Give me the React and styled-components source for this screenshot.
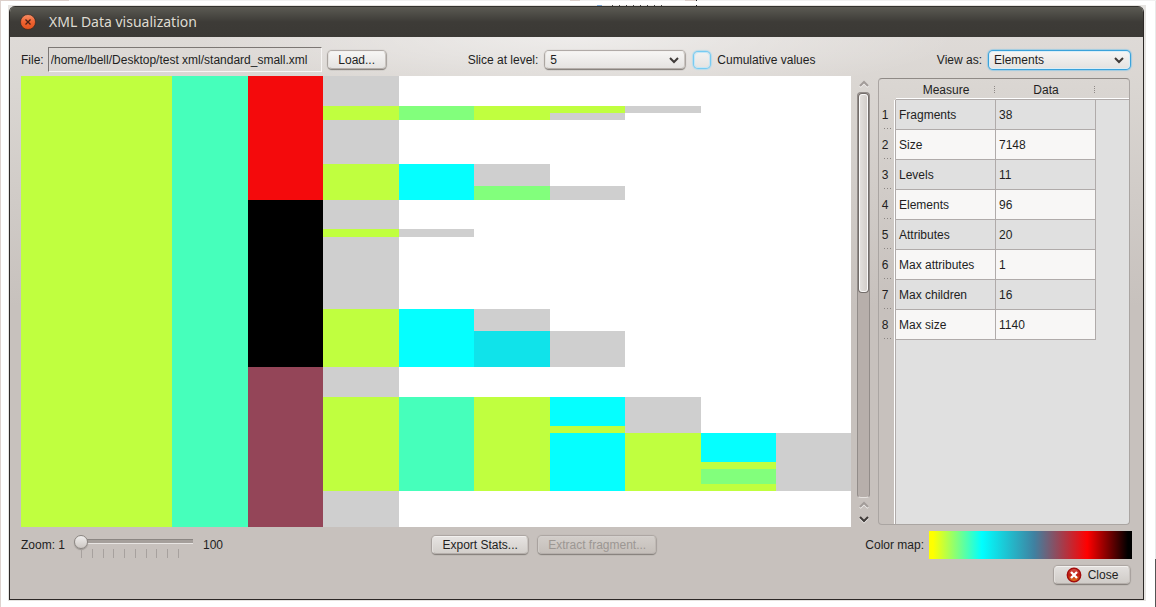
import React, { useState } from "react";
import styled, { createGlobalStyle, css } from "styled-components";

const GlobalStyle = createGlobalStyle`
  *, *::before, *::after { box-sizing: border-box; }
  body {
    margin: 0;
    background: #fff;
    color: #221e1e;
    font: 12px/16px "Liberation Sans", Arial, sans-serif;
  }
  button, input, select { font: inherit; color: inherit; margin: 0; }
`;

const Desktop = styled.div`
  display: flex;
  min-height: 100vh;
  padding: 6px 12px 7px 9px;
  background:
    linear-gradient(#dccfca, #dccfca) 0 0 / 69px 1px no-repeat,
    linear-gradient(#dccfca, #dccfca) 570px 0 / 10px 1px no-repeat,
    linear-gradient(#dccfca, #dccfca) 685px 0 / 11px 1px no-repeat,
    linear-gradient(#222, #222) 696px 0 / 1px 1px no-repeat,
    linear-gradient(#222, #222) 696px 5px / 1px 1px no-repeat,
    linear-gradient(#7ba3cc, #7ba3cc) 597px 5px / 5px 1px no-repeat,
    repeating-linear-gradient(to right, #444 0 1px, transparent 1px 7px) 612px 5px / 52px 1px no-repeat,
    linear-gradient(#f1f1f1, #f1f1f1) 0 0 / 100% 1px no-repeat,
    linear-gradient(#ddd2ce, #ddd2ce) 0 0 / 1px 100% no-repeat,
    linear-gradient(#555, #555) 100% 100% / 1px 48px no-repeat,
    linear-gradient(#e9e9e9, #e9e9e9) 100% 0 / 1px 100% no-repeat,
    linear-gradient(#e6e4e1, #e6e4e1) 8px 5px / calc(100% - 18px) calc(100% - 11px) no-repeat,
    #fff;
`;

const Window = styled.main`
  flex: 1;
  min-width: 0;
  display: flex;
  flex-direction: column;
  border: 1px solid #2c2826;
  border-top: 0;
  border-radius: 6px 6px 0 0;
  overflow: hidden;
  background:
    radial-gradient(ellipse 380px 60px at 50% 31px, rgba(255, 255, 255, 0.5), transparent),
    linear-gradient(#dedad7 31px, #dad6d2 80px, #c7c1bd 300px);
`;

const TitleBar = styled.header`
  display: flex;
  align-items: center;
  gap: 13px;
  height: 31px;
  padding-left: 10px;
  background: linear-gradient(#33312d 0 1px, #5b5a53 1px, #3d3b37 16px, #3b3935);
`;

const Title = styled.h1`
  margin: 0;
  font: 14px/18px "Noto Sans", sans-serif;
  color: #dfdbd2;
`;

const WindowClose = styled.button`
  display: flex;
  padding: 0;
  border: 0;
  background: none;
`;

const Toolbar = styled.div`
  display: flex;
  align-items: center;
  height: 39px;
  padding: 6px 12px 0 11px;
  white-space: nowrap;
`;

const Spacer = styled.div`
  flex: ${(p) => p.$grow || 1};
`;

const Label = styled.label`
  margin-right: ${(p) => p.$gap ?? 6}px;
`;

const PathBox = styled.input`
  width: 274px;
  height: 25px;
  margin-right: 5px;
  padding: 0 2px;
  border: 1px solid;
  border-color: #7c7774 #f7f5f4 #f7f5f4 #7c7774;
  border-radius: 0;
  background: transparent;
  outline: 0;
`;

const raised = css`
  border: 1px solid;
  border-color: #f3f1ef #c9c4c0 #b5afab #e4e1de;
  border-radius: 4px;
  box-shadow: 0 1px 1px #85807c, 0 0 1px 1px #aaa4a0;
  background: linear-gradient(${(p) => p.$tone || "#f6f5f4, #e5e3e1"});
`;

const Button = styled.button`
  ${raised}
  display: flex;
  align-items: center;
  justify-content: center;
  gap: 6px;
  width: ${(p) => p.$width}px;
  height: 18px;
  margin: 0 1px;
  padding: 0;
  white-space: nowrap;
  &:disabled { color: #9c9793; border-color: #d4d0cd #bfb9b4 #b5afab #d0ccc8; }
`;

const SelectFrame = styled.span`
  display: flex;
  align-items: center;
  margin: 0 1px;
`;

const Select = styled.select`
  ${raised}
  appearance: none;
  width: ${(p) => p.$width}px;
  height: 18px;
  padding: 0 4px;
  outline: 0;
  ${(p) => p.$focused && css`
    border-color: #d9eef8;
    box-shadow: 0 0 0 1px #3ba2da, 0 0 1px 2px #9fcbe2;
  `}
`;

const SelectArrow = styled.svg`
  margin-left: -16px;
  pointer-events: none;
`;

const CheckBox = styled.input`
  appearance: none;
  width: 16px;
  height: 16px;
  border: 1px solid #c5e6f5;
  border-radius: 4px;
  background: linear-gradient(#f2f1f0, #e6e4e2);
  box-shadow: 0 0 0 1px #77cbf2, 0 0 1px 2px #b9dbea;
  &:checked { background: #77cbf2; }
`;

const CheckField = styled.div`
  display: flex;
  align-items: center;
  gap: 7px;
  margin-left: 8px;
`;

const Content = styled.div`
  flex: 1;
  display: flex;
  min-height: 300px;
  padding: 0 13px 0 11px;
`;

const Chart = styled.svg`
  flex: 1;
  min-width: 0;
  height: auto;
  background: #fff;
`;

const ScrollBar = styled.div`
  display: flex;
  flex-direction: column;
  align-items: center;
  width: 13px;
  margin: 0 8px 0 6px;
`;

const ScrollButton = styled.button`
  display: flex;
  align-items: center;
  justify-content: center;
  width: 13px;
  height: ${(p) => p.$height}px;
  padding: 0;
  border: 0;
  background: none;
`;

const ScrollTrack = styled.div`
  flex: 1;
  width: 13px;
  border: 1px solid #928c89;
  border-bottom-color: #e6e2df;
  border-radius: 4px;
  background: #b7afab;
`;

const ScrollThumb = styled.div`
  height: 49%;
  border: 1px solid #fbfafa;
  border-radius: 3px;
  box-shadow: 0 0 0 1px #736d6a;
  background: linear-gradient(to right, #e3e0dd, #d3ceca);
  margin: 1px;
`;

const Panel = styled.section`
  width: 252px;
  margin: 2px 0;
  border: 1px solid #aaa5a2;
  border-top-color: #8f8a86;
  border-radius: 4px;
  background: linear-gradient(to right, transparent 15px, #fff 15px 16px, #b0abaa 16px 17px, #e0e0e0 17px) 0 21px no-repeat;
`;

const Table = styled.table`
  width: 100%;
  table-layout: fixed;
  border-collapse: separate;
  border-spacing: 0;
`;

const HeadCell = styled.th`
  width: ${(p) => p.$width};
  height: 21px;
  padding: 1px 0 0;
  font-weight: normal;
  border-bottom: 1px solid ${(p) => (p.$corner ? "transparent" : "#b0abaa")};
  box-shadow: ${(p) => (p.$corner ? "none" : "inset 0 -1px #fff")};
  background: ${(p) => (p.$grip
    ? "repeating-linear-gradient(#8f8a87 0 1px, transparent 1px 2px) 98px 7px / 1px 7px no-repeat"
    : "none")};
`;

const RowNumber = styled.th`
  height: 30px;
  padding: 0 5px 0 0;
  font-weight: normal;
  text-align: center;
  background: repeating-linear-gradient(to right, #8a8582 0 1px, transparent 1px 3px) 5px 28px / 7px 1px no-repeat;
`;

const Cell = styled.td`
  height: 30px;
  padding: 0 3px;
  border: 1px solid #b0abaa;
  border-width: 0 1px 1px 0;
  background: ${(p) => (p.$odd ? "#e0e0e0" : "#f8f7f6")};
`;

const Footer = styled.div`
  display: flex;
  align-items: center;
  height: 32px;
  padding: 3px 11px 0;
  white-space: nowrap;
`;

const ZoomControl = styled.div`
  display: flex;
  flex-direction: column;
  width: 119px;
  margin: 3px 10px 0 3px;
`;

const Slider = styled.input`
  appearance: none;
  width: 119px;
  height: 15px;
  background: linear-gradient(#8b8683 0 1px, #a59f9b 1px 4px, #e8e5e3 4px 5px) 7px 5px / 112px 5px no-repeat;
  outline: 0;
  &::-webkit-slider-thumb {
    appearance: none;
    width: 14px;
    height: 14px;
    border: 1px solid #8b8682;
    border-radius: 50%;
    background: linear-gradient(#f0eeed, #cdc8c4);
    box-shadow: 0 1px 1px #9a9591;
  }
`;

const Ticks = styled.div`
  display: flex;
  justify-content: space-between;
  width: 98px;
  height: 9px;
  margin-left: 7px;
`;

const Tick = styled.i`
  width: 1px;
  background: #a7a19e;
`;

const ButtonPair = styled.div`
  display: flex;
  gap: 8px;
`;

const ColorMap = styled.div`
  width: 203px;
  height: 28px;
  background: linear-gradient(to right, #ff0 2%, #0ff 26%, #4080a0 52%, #f00 78%, #000 98%);
`;

const Actions = styled.div`
  display: flex;
  justify-content: flex-end;
  padding: 7px 12px 15px;
`;

const LIME = "#c0ff3f";
const AQUA = "#46ffbb";
const CYAN = "#05ffff";
const GREEN = "#82ff7c";
const GREY = "#cfcfcf";

/* x edges of the nesting levels; the root element spans two units */
const EDGES = [0, 151, 227, 302, 378, 453, 529, 604, 680, 755, 830];

/* [level, top, bottom, fill] */
const FRAGMENTS = [
  [0, 0, 451, LIME],
  [1, 0, 451, AQUA],
  [2, 0, 124, "#f40a0c"],
  [2, 124, 291, "#000"],
  [2, 291, 451, "#944558"],
  [3, 0, 451, GREY],
  [3, 30, 44, LIME],
  [3, 88, 124, LIME],
  [3, 153, 161, LIME],
  [3, 233, 291, LIME],
  [3, 321, 415, LIME],
  [4, 30, 44, GREEN],
  [4, 88, 124, CYAN],
  [4, 153, 161, GREY],
  [4, 233, 291, CYAN],
  [4, 321, 415, AQUA],
  [5, 30, 44, LIME],
  [5, 88, 110, GREY],
  [5, 110, 124, GREEN],
  [5, 233, 255, GREY],
  [5, 255, 291, "#10e3ea"],
  [5, 321, 415, LIME],
  [6, 30, 37, LIME],
  [6, 37, 44, GREY],
  [6, 110, 124, GREY],
  [6, 255, 291, GREY],
  [6, 321, 350, CYAN],
  [6, 350, 357, LIME],
  [6, 357, 415, CYAN],
  [7, 30, 37, GREY],
  [7, 321, 357, GREY],
  [7, 357, 415, LIME],
  [8, 357, 386, CYAN],
  [8, 386, 393, LIME],
  [8, 393, 408, GREEN],
  [8, 408, 415, LIME],
  [9, 357, 415, GREY],
];

const STATS = [
  ["Fragments", 38],
  ["Size", 7148],
  ["Levels", 11],
  ["Elements", 96],
  ["Attributes", 20],
  ["Max attributes", 1],
  ["Max children", 16],
  ["Max size", 1140],
];

function Chevron({ up, faint }) {
  const d = up ? "M1 6 5 2 9 6" : "M1 2 5 6 9 2";
  return (
    <svg width="10" height="9" viewBox="0 0 10 9" fill="none" aria-hidden="true">
      <path d={d} transform="translate(0 1)" stroke="#f4f2f0" strokeWidth="2" />
      <path d={d} stroke={faint ? "#a29c99" : "#3f3b39"} strokeWidth="2" />
    </svg>
  );
}

function DropDown({ id, width, focused, options }) {
  return (
    <SelectFrame>
      <Select id={id} $width={width} $focused={focused}>
        {options.map((o) => <option key={o}>{o}</option>)}
      </Select>
      <SelectArrow width="16" height="8" viewBox="0 0 16 8" fill="none" aria-hidden="true">
        <path d="M1 2 5 6 9 2" stroke="#3f3b39" strokeWidth="2" />
      </SelectArrow>
    </SelectFrame>
  );
}

export default function App() {
  const [zoom, setZoom] = useState(1);
  const [cumulative, setCumulative] = useState(false);
  return (
    <Desktop>
      <GlobalStyle />
      <Window>
        <TitleBar>
          <WindowClose aria-label="Close window">
            <svg width="16" height="16" viewBox="0 0 16 16" aria-hidden="true">
              <defs>
                <linearGradient id="orb" x2="0" y2="1">
                  <stop stopColor="#f79068" />
                  <stop offset="0.5" stopColor="#ee6231" />
                  <stop offset="1" stopColor="#e2531c" />
                </linearGradient>
              </defs>
              <circle cx="8" cy="8" r="7.5" fill="url(#orb)" stroke="#33211b" strokeWidth="0.6" />
              <path d="M5.5 5.5 10.5 10.5M10.5 5.5 5.5 10.5" stroke="#4a2113" strokeWidth="1.3" />
            </svg>
          </WindowClose>
          <Title>XML Data visualization</Title>
        </TitleBar>

        <Toolbar>
          <Label htmlFor="file" $gap={4}>File:</Label>
          <PathBox id="file" readOnly value="/home/lbell/Desktop/test xml/standard_small.xml" />
          <Button $width={58}>Load...</Button>
          <Spacer $grow={2} />
          <Label htmlFor="level">Slice at level:</Label>
          <DropDown id="level" width={140} options={["5", "4", "3", "2", "1"]} />
          <CheckField>
            <CheckBox
              id="cumulative"
              type="checkbox"
              checked={cumulative}
              onChange={(e) => setCumulative(e.target.checked)}
            />
            <Label htmlFor="cumulative" $gap={0}>Cumulative values</Label>
          </CheckField>
          <Spacer $grow={3} />
          <Label htmlFor="view">View as:</Label>
          <DropDown id="view" width={141} focused options={["Elements", "Attributes", "Size"]} />
        </Toolbar>

        <Content>
          <Chart viewBox="0 0 830 451" preserveAspectRatio="none" shapeRendering="crispEdges" role="img" aria-label="Fragment map">
            {FRAGMENTS.map(([level, top, bottom, fill], i) => (
              <rect
                key={i}
                x={EDGES[level]}
                y={top}
                width={EDGES[level + 1] - EDGES[level]}
                height={bottom - top}
                fill={fill}
              />
            ))}
          </Chart>
          <ScrollBar>
            <ScrollButton $height={16} aria-label="Scroll up"><Chevron up faint /></ScrollButton>
            <ScrollTrack><ScrollThumb /></ScrollTrack>
            <ScrollButton $height={14} aria-label="Page up"><Chevron up faint /></ScrollButton>
            <ScrollButton $height={15} aria-label="Scroll down"><Chevron /></ScrollButton>
          </ScrollBar>
          <Panel>
            <Table>
              <thead>
                <tr>
                  <HeadCell $width="17px" $corner />
                  <HeadCell $width="100px" $grip scope="col">Measure</HeadCell>
                  <HeadCell $width="100px" $grip scope="col">Data</HeadCell>
                  <HeadCell $width="auto" />
                </tr>
              </thead>
              <tbody>
                {STATS.map(([name, value], i) => (
                  <tr key={name}>
                    <RowNumber scope="row">{i + 1}</RowNumber>
                    <Cell $odd={i % 2 === 0}>{name}</Cell>
                    <Cell $odd={i % 2 === 0}>{value}</Cell>
                  </tr>
                ))}
              </tbody>
            </Table>
          </Panel>
        </Content>

        <Footer>
          <Label htmlFor="zoom">Zoom: 1</Label>
          <ZoomControl>
            <Slider id="zoom" type="range" min="1" max="100" value={zoom} onChange={(e) => setZoom(+e.target.value)} />
            <Ticks>{Array.from({ length: 10 }, (_, i) => <Tick key={i} />)}</Ticks>
          </ZoomControl>
          <span>100</span>
          <Spacer />
          <ButtonPair>
            <Button $width={96} $tone="#e6e3e1, #d3cfcb">Export Stats...</Button>
            <Button $width={118} $tone="#d2cdc9, #c5bfba" disabled>Extract fragment...</Button>
          </ButtonPair>
          <Spacer />
          <Label as="span" $gap={5}>Color map:</Label>
          <ColorMap />
        </Footer>

        <Actions>
          <Button $width={76} $tone="#e2dfdd, #d0ccc8">
            <svg width="16" height="16" viewBox="0 0 16 16" aria-hidden="true">
              <defs>
                <linearGradient id="stop" x2="0" y2="1">
                  <stop stopColor="#d9584e" />
                  <stop offset="0.5" stopColor="#c01a10" />
                  <stop offset="1" stopColor="#e2831c" />
                </linearGradient>
              </defs>
              <circle cx="8" cy="8" r="6.7" fill="url(#stop)" stroke="#a30d0d" strokeWidth="1.4" />
              <path d="M5 5 11 11M11 5 5 11" stroke="#fff" strokeWidth="2.4" />
            </svg>
            Close
          </Button>
        </Actions>
      </Window>
    </Desktop>
  );
}
